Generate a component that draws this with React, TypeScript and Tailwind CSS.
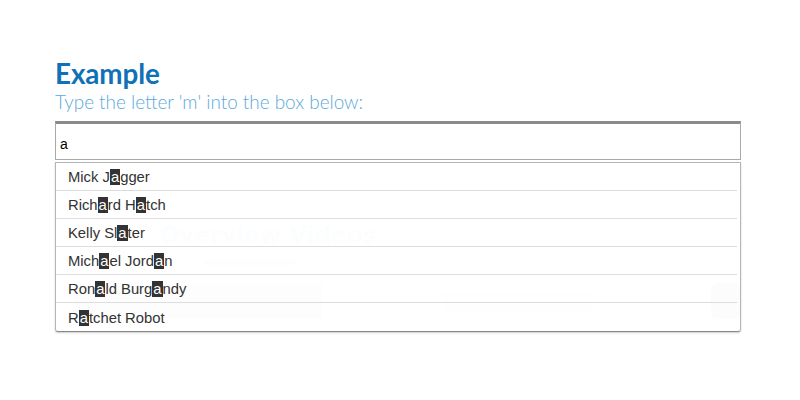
import React from "react";

const names = [
  "Mick Jagger",
  "Richard Hatch",
  "Kelly Slater",
  "Michael Jordan",
  "Ronald Burgandy",
  "Ratchet Robot",
];

function Highlight({ text }: { text: string }) {
  const parts = text.split(/(a)/);
  return (
    <>
      {parts.map((p, i) =>
        p === "a" ? (
          <span key={i} className="bg-[#333333] text-white px-[1px]">
            a
          </span>
        ) : (
          <span key={i}>{p}</span>
        )
      )}
    </>
  );
}

export default function App() {
  return (
    <div className="w-[800px] h-[400px] bg-white overflow-hidden relative">
      <div className="pl-[55px] pr-[59px] pt-[57px]">
        <h1
          className="text-[27.8px] font-bold leading-[33px] text-[#1171b8] tracking-[-0.1px]"
          style={{ fontFamily: "Lato, 'Open Sans', sans-serif" }}
        >
          Example
        </h1>
        <p
          className="text-[18.9px] leading-[24px] text-[#5aaadc] font-light"
          style={{ fontFamily: "Lato, 'Open Sans', sans-serif" }}
        >
          Type the letter 'm' into the box below:
        </p>
        <div className="relative mt-[7px]">
          <div className="h-[39px] border border-[#a9a9a9] border-t-[3px] border-t-[#8a8a8a] bg-white flex items-center pl-[4px]">
            <span
              className="text-[14px] text-black pt-[5px]"
              style={{ fontFamily: "Arial, 'Liberation Sans', sans-serif" }}
            >
              a
            </span>
          </div>
          {/* ghost page content behind the semi-transparent list */}
          <div className="mt-[2px] h-[168px] relative">
            <div
              className="pt-[56px] pl-[105px] text-[23px] font-bold text-[#e8f0f8]"
              style={{ fontFamily: "Verdana, 'DejaVu Sans', sans-serif" }}
            >
              Overview Videos
            </div>
            <div className="flex gap-[8px] pl-[150px] mt-[6px]">
              <div className="w-[90px] h-[6px] bg-[#f3f3f3]" />
            </div>
            <div className="flex items-center mt-[18px] pl-[18px] gap-[120px]">
              <div className="w-[300px] h-[34px] bg-[#f1f1f1]" />
              <div className="w-[180px] h-[20px] bg-[#f6f6f6]" />
              <div className="w-[36px] h-[36px] rounded-[6px] bg-[#eeeeee]" />
            </div>
          </div>
          <div
            className="absolute left-0 top-[41px] w-[686px] bg-white/85 border border-[#b5b5b5] border-b-[#888888] rounded-b-[3px] shadow-[0_1px_2px_rgba(0,0,0,0.2)]"
            style={{ fontFamily: "Arial, 'Liberation Sans', sans-serif" }}
          >
            {names.map((n, i) => (
              <div
                key={n}
                className={
                  "h-[28px] flex items-center pl-[12px] pt-[2px] mr-[3px] text-[14.8px] text-[#333333] " +
                  (i < names.length - 1 ? "border-b border-[#dddddd]" : "")
                }
              >
                <span className="leading-[17px]">
                  <Highlight text={n} />
                </span>
              </div>
            ))}
          </div>
        </div>
      </div>
    </div>
  );
}
